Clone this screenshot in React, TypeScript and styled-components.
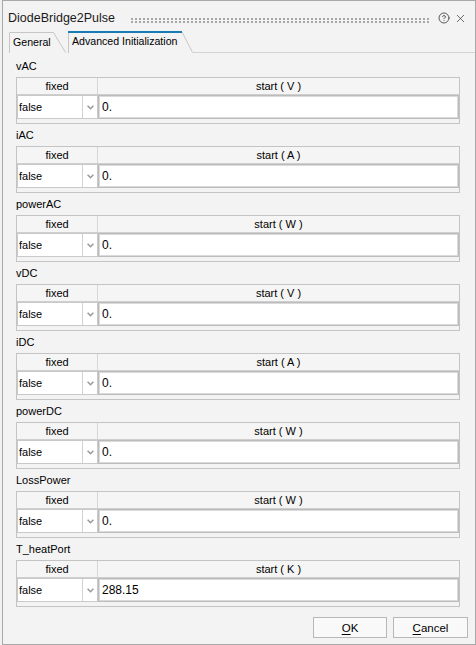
import React from "react";
import styled, { createGlobalStyle } from "styled-components";
import { CircleHelp, X } from "lucide-react";

const GlobalStyle = createGlobalStyle`
  html, body {
    margin: 0;
    padding: 0;
    background: #f0f0f0;
  }
  body {
    font-family: "Liberation Sans", Arial, sans-serif;
    color: #000;
  }
  * { box-sizing: border-box; }
`;

const Window = styled.div`
  margin-left: 2px;
  width: 474px;
  height: 645px;
  border: 1px solid #a9a9a9;
  background: #f3f3f3;
  display: flex;
  flex-direction: column;
`;

const TitleBar = styled.div`
  height: 30px;
  flex: none;
  display: flex;
  align-items: center;
  padding: 4px 8px 0 5px;
`;

const Title = styled.span`
  font-size: 12.5px;
  color: #1a1a1a;
  white-space: nowrap;
`;

const Grip = styled.div`
  flex: 1;
  height: 5px;
  margin: 4px 8px 0 16px;
  background-image:
    linear-gradient(to right, #a8a8a8 0 2px, transparent 2px 4px),
    linear-gradient(to right, #a8a8a8 0 2px, transparent 2px 4px);
  background-size: 4px 2px, 4px 2px;
  background-position: 0 0, 0 3px;
  background-repeat: repeat-x;
`;

const TitleIcons = styled.div`
  display: flex;
  align-items: center;
  gap: 4px;
  color: #333;
`;

const TabBar = styled.div`
  height: 22px;
  flex: none;
  display: flex;
  align-items: flex-end;
  padding-left: 6px;
`;

const Tab = styled.div<{ $active?: boolean; $w: number }>`
  position: relative;
  width: ${(p) => p.$w}px;
  height: ${(p) => (p.$active ? 22 : 21)}px;
  margin-right: ${(p) => (p.$active ? 0 : 2)}px;
  font-size: 10.6px;
  line-height: ${(p) => (p.$active ? 21 : 20)}px;
  padding-left: 4px;
  white-space: nowrap;
  color: #000;

  svg {
    position: absolute;
    left: 0;
    top: 0;
  }
  span {
    position: relative;
  }
`;

const TabFiller = styled.div`
  flex: 1;
  height: 22px;
  border-bottom: 1px solid #d4d4d4;
`;

const Panel = styled.div`
  flex: none;
  padding: 2px 15px 0 13px;
  display: flex;
  flex-direction: column;
`;

const GroupLabel = styled.div`
  height: 22px;
  line-height: 22px;
  font-size: 11px;
`;

const Table = styled.div`
  border: 1px solid #c4c4c4;
  padding-bottom: 4px;
`;

const HeaderRow = styled.div`
  display: grid;
  grid-template-columns: 81px 1fr;
  height: 17px;
  border-bottom: 1px solid #cfcfcf;
  background: #f5f5f5;
`;

const HeaderCell = styled.div<{ $first?: boolean }>`
  font-size: 11px;
  line-height: 16px;
  text-align: center;
  border-right: ${(p) => (p.$first ? "1px solid #d6d6d6" : "none")};
`;

const DataRow = styled.div`
  display: flex;
  height: 24px;
`;

const Combo = styled.div`
  width: 81px;
  display: flex;
  background: #fff;
  border: 1px solid #c9c9c9;
`;

const ComboText = styled.div`
  width: 65px;
  font-size: 11px;
  line-height: 22px;
  padding-left: 1px;
  border-right: 1px solid #d2d2d2;
`;

const ComboArrow = styled.div`
  flex: 1;
  display: flex;
  align-items: center;
  justify-content: center;
`;

const ValueInput = styled.div`
  flex: 1;
  background: #fff;
  border: 1px solid #bcbcbc;
  box-shadow: inset 0 0 0 1px #dadada;
  font-size: 12px;
  line-height: 22px;
  padding-left: 3px;
`;

const Footer = styled.div`
  display: flex;
  justify-content: flex-end;
  gap: 6px;
  padding: 10px 7px 0 0;
`;

const Button = styled.button<{ $w: number }>`
  width: ${(p) => p.$w}px;
  height: 21px;
  border: 1px solid #b8b8b8;
  background: #f9f9f9;
  font-family: "Liberation Sans", Arial, sans-serif;
  font-size: 11.5px;
  color: #000;
  padding: 0;

  u {
    text-decoration: underline;
    text-underline-offset: 2px;
  }
`;

const params = [
  { name: "vAC", unit: "V", value: "0." },
  { name: "iAC", unit: "A", value: "0." },
  { name: "powerAC", unit: "W", value: "0." },
  { name: "vDC", unit: "V", value: "0." },
  { name: "iDC", unit: "A", value: "0." },
  { name: "powerDC", unit: "W", value: "0." },
  { name: "LossPower", unit: "W", value: "0." },
  { name: "T_heatPort", unit: "K", value: "288.15" },
];

const Chevron = () => (
  <svg width="7" height="5" viewBox="0 0 7 5">
    <path d="M0.6 0.8 L3.5 3.7 L6.4 0.8" fill="none" stroke="#9a9a9a" strokeWidth="1.6" />
  </svg>
);

export default function App() {
  return (
    <>
      <GlobalStyle />
      <Window>
        <TitleBar>
          <Title>DiodeBridge2Pulse</Title>
          <Grip />
          <TitleIcons>
            <CircleHelp size={12} strokeWidth={1.6} />
            <X size={13} strokeWidth={1.3} />
          </TitleIcons>
        </TitleBar>
        <TabBar>
          <Tab $w={57}>
            <svg width="57" height="21" viewBox="0 0 57 21">
              <path d="M0.5 21 V0.5 H44.5 L56.5 20.5" fill="none" stroke="#c6c6c6" />
            </svg>
            <span>General</span>
          </Tab>
          <Tab $active $w={125}>
            <svg width="125" height="22" viewBox="0 0 125 22">
              <path d="M0.5 22 V1" fill="none" stroke="#c6c6c6" />
              <path d="M114 1 L124.5 21.5" fill="none" stroke="#c6c6c6" />
              <path d="M0 1 H114" fill="none" stroke="#1a7ab3" strokeWidth="2" />
            </svg>
            <span>Advanced Initialization</span>
          </Tab>
          <TabFiller />
        </TabBar>
        <Panel>
          {params.map((p) => (
            <div key={p.name}>
              <GroupLabel>{p.name}</GroupLabel>
              <Table>
                <HeaderRow>
                  <HeaderCell $first>fixed</HeaderCell>
                  <HeaderCell>start ( {p.unit} )</HeaderCell>
                </HeaderRow>
                <DataRow>
                  <Combo>
                    <ComboText>false</ComboText>
                    <ComboArrow>
                      <Chevron />
                    </ComboArrow>
                  </Combo>
                  <ValueInput>{p.value}</ValueInput>
                </DataRow>
              </Table>
            </div>
          ))}
        </Panel>
        <Footer>
          <Button $w={74}>
            <u>O</u>K
          </Button>
          <Button $w={75}>
            <u>C</u>ancel
          </Button>
        </Footer>
      </Window>
    </>
  );
}
